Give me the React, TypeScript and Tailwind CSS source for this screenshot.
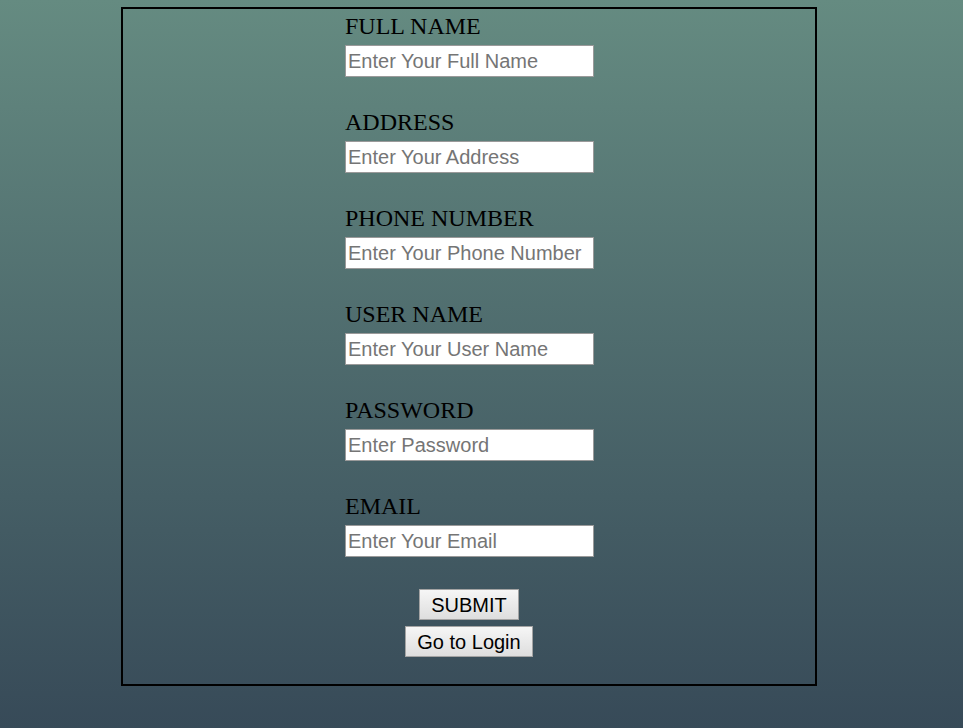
import React from 'react';

const fields = [
  { label: 'FULL NAME', placeholder: 'Enter Your Full Name', type: 'text' },
  { label: 'ADDRESS', placeholder: 'Enter Your Address', type: 'text' },
  { label: 'PHONE NUMBER', placeholder: 'Enter Your Phone Number', type: 'text' },
  { label: 'USER NAME', placeholder: 'Enter Your User Name', type: 'text' },
  { label: 'PASSWORD', placeholder: 'Enter Password', type: 'password' },
  { label: 'EMAIL', placeholder: 'Enter Your Email', type: 'email' },
];

export default function App(): React.JSX.Element {
  return (
    <div className="min-h-screen bg-linear-to-b from-[#658b81] to-[#374a58] pt-[7px] pb-[42px]">
      <form className="ml-[121px] w-[696px] border-2 border-black px-4 pt-[4px] pb-[27px] flex flex-col items-center">
        <div className="w-[249px] ml-[1px] flex flex-col gap-[32px]">
          {fields.map((f) => (
            <div key={f.label} className="flex flex-col">
              <label className="block text-[24px] leading-[26px] text-black font-['Liberation_Serif',serif]">
                {f.label}
              </label>
              <input
                type={f.type}
                placeholder={f.placeholder}
                className="mt-[6px] h-[32px] w-[249px] bg-white border border-[#9a9a9a] px-[2px] text-[20px] text-black placeholder:text-[#757575] font-['Liberation_Sans',Arial,sans-serif] outline-none"
              />
            </div>
          ))}
        </div>
        <button
          type="submit"
          className="mt-[32px] h-[31px] px-[11px] border border-[#a3a3a3] bg-linear-to-b from-[#f6f6f6] to-[#dedede] text-[20px] text-black font-['Liberation_Sans',Arial,sans-serif]"
        >
          SUBMIT
        </button>
        <button
          type="button"
          className="mt-[6px] h-[31px] px-[11px] border border-[#a3a3a3] bg-linear-to-b from-[#f6f6f6] to-[#dedede] text-[20px] text-black font-['Liberation_Sans',Arial,sans-serif]"
        >
          Go to Login
        </button>
      </form>
    </div>
  );
}
